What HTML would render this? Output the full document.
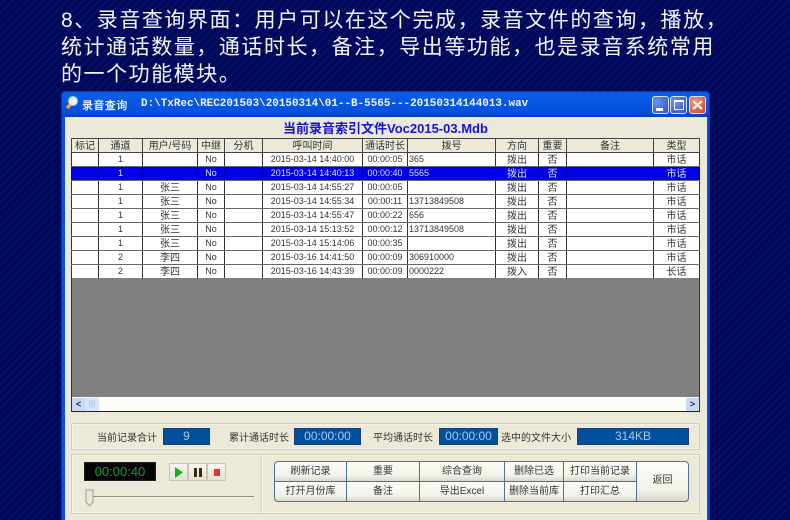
<!DOCTYPE html>
<html><head><meta charset="utf-8">
<style>
*{box-sizing:border-box}
html,body{margin:0;padding:0}
body{width:790px;height:520px;overflow:hidden;position:relative;font-family:"Liberation Sans","Noto Sans CJK SC",sans-serif;filter:blur(.3px);
background:#00085a repeating-linear-gradient(135deg,#00085a 0 3px,#081470 3px 4px,#00085a 4px 5.6px)}
.a{position:absolute}
.h{left:61px;color:#f4f5fa;font-size:21px;line-height:27px;letter-spacing:1.55px;white-space:nowrap}
#win{left:61px;top:91px;width:649px;height:429px;background:#0a52d8;border-radius:4px 4px 0 0;border:1px solid #0838b0;border-bottom:none}
#tb{left:0;top:0;width:647px;height:25px;background:linear-gradient(#0b5ae0,#0a5ce8 10%,#0550dc 80%,#0440c0);border-radius:4px 4px 0 0}
#in{left:3px;top:25px;width:642px;height:403px;background:#ece9d8}
.t{color:#fff;font-weight:bold;white-space:nowrap}
.wb{top:96px;width:17px;height:18px;border-radius:3px;border:1px solid #d8e4f8}
table{border-collapse:collapse;table-layout:fixed;position:absolute;left:71px;top:138px;width:628px;font-size:9px;color:#333}
td,th{height:14px;padding:0;border:1px solid #333;border-top-color:#666;border-bottom-color:#666;text-align:center;font-weight:normal;overflow:hidden;white-space:nowrap;line-height:13px}
th{background:#ece9d8;font-size:10px;border-color:#444;color:#333}
th span,td.c span{position:relative;top:1px}
td{background:#fff}
td.c{font-size:10px}
td.l{text-align:left;padding-left:1px}
tr.s td{background:#0000e8;color:#d8e0ff;border-left-color:#0000b0;border-right-color:#0000b0}
.p{background:#ece9d8;border:1px solid #d0cdb8;box-shadow:inset 0 0 0 1px #f4f2e6}
.lb{font-size:10px;color:#333;white-space:nowrap}
.v{background:#00509e;color:#a4c8f0;font-size:12px;text-align:center;line-height:15px;height:17px;top:428px;border:1px solid #1c3e70}
.b{position:absolute;background:linear-gradient(#fcfcf8,#f2f2ea 70%,#d8d8cc);border:1px solid #4c7098;font-size:10px;color:#333;text-align:center;white-space:nowrap}
.pb{position:absolute;top:463px;height:18px;background:linear-gradient(#f8f6ee,#e4e1d2);border:1px solid #c8c5b4}
</style></head><body>
<div class="a h" style="top:7px">8、录音查询界面：用户可以在这个完成，录音文件的查询，播放，</div>
<div class="a h" style="top:34px">统计通话数量，通话时长，备注，导出等功能，也是录音系统常用</div>
<div class="a h" style="top:61px">的一个功能模块。</div>

<div class="a" id="win"><div class="a" id="tb"></div><div class="a" id="in"></div></div>

<svg class="a" style="left:64px;top:95px" width="16" height="16" viewBox="0 0 16 16"><line x1="7" y1="9" x2="3" y2="13" stroke="#f0a030" stroke-width="3.5"/><circle cx="9" cy="6" r="4.5" fill="#e8f2fc" stroke="#a8c8e8"/></svg>
<div class="a t" style="left:82px;top:97px;font-size:11px;font-weight:normal;letter-spacing:.4px;-webkit-text-stroke:.2px #fff">录音查询</div>
<div class="a t" style="left:141px;top:97px;font-family:'Liberation Mono',monospace;font-size:10.95px;line-height:14px;color:#f0f4ff">D:\TxRec\REC201503\20150314\01--B-5565---20150314144013.wav</div>

<div class="a wb" style="left:652px;background:radial-gradient(circle at 30% 30%,#6c92ee,#2a50c8)"><div class="a" style="left:3px;top:11px;width:7px;height:3px;background:#fff"></div></div>
<div class="a wb" style="left:670px;background:radial-gradient(circle at 30% 30%,#6c92ee,#2a50c8)"><div class="a" style="left:3px;top:3px;width:10px;height:10px;border:1px solid #fff;border-top-width:2px"></div></div>
<div class="a wb" style="left:689px;background:radial-gradient(circle at 30% 30%,#f09878,#d84020)"><svg class="a" style="left:2px;top:3px" width="11" height="10"><path d="M1 1L10 9M10 1L1 9" stroke="#fff" stroke-width="2"/></svg></div>

<div class="a" style="left:283px;top:121px;font-size:13px;line-height:16px;font-weight:bold;color:#1414d8;white-space:nowrap">当前录音索引文件Voc2015-03.Mdb</div>

<table>
<colgroup><col style="width:27px"><col style="width:44px"><col style="width:55px"><col style="width:27px"><col style="width:38px"><col style="width:100px"><col style="width:45px"><col style="width:88px"><col style="width:43px"><col style="width:28px"><col style="width:87px"><col style="width:46px"></colgroup>
<tr><th><span>标记</span></th><th><span>通道</span></th><th><span>用户/号码</span></th><th><span>中继</span></th><th><span>分机</span></th><th><span>呼叫时间</span></th><th><span>通话时长</span></th><th><span>拨号</span></th><th><span>方向</span></th><th><span>重要</span></th><th><span>备注</span></th><th><span>类型</span></th></tr>
<tr><td></td><td>1</td><td></td><td>No</td><td></td><td>2015-03-14 14:40:00</td><td>00:00:05</td><td class="l">365</td><td class="c"><span>拨出</span></td><td class="c"><span>否</span></td><td></td><td class="c"><span>市话</span></td></tr>
<tr class="s"><td></td><td>1</td><td></td><td>No</td><td></td><td>2015-03-14 14:40:13</td><td>00:00:40</td><td class="l">5565</td><td class="c"><span>拨出</span></td><td class="c"><span>否</span></td><td></td><td class="c"><span>市话</span></td></tr>
<tr><td></td><td>1</td><td class="c"><span>张三</span></td><td>No</td><td></td><td>2015-03-14 14:55:27</td><td>00:00:05</td><td class="l"></td><td class="c"><span>拨出</span></td><td class="c"><span>否</span></td><td></td><td class="c"><span>市话</span></td></tr>
<tr><td></td><td>1</td><td class="c"><span>张三</span></td><td>No</td><td></td><td>2015-03-14 14:55:34</td><td>00:00:11</td><td class="l">13713849508</td><td class="c"><span>拨出</span></td><td class="c"><span>否</span></td><td></td><td class="c"><span>市话</span></td></tr>
<tr><td></td><td>1</td><td class="c"><span>张三</span></td><td>No</td><td></td><td>2015-03-14 14:55:47</td><td>00:00:22</td><td class="l">656</td><td class="c"><span>拨出</span></td><td class="c"><span>否</span></td><td></td><td class="c"><span>市话</span></td></tr>
<tr><td></td><td>1</td><td class="c"><span>张三</span></td><td>No</td><td></td><td>2015-03-14 15:13:52</td><td>00:00:12</td><td class="l">13713849508</td><td class="c"><span>拨出</span></td><td class="c"><span>否</span></td><td></td><td class="c"><span>市话</span></td></tr>
<tr><td></td><td>1</td><td class="c"><span>张三</span></td><td>No</td><td></td><td>2015-03-14 15:14:06</td><td>00:00:35</td><td class="l"></td><td class="c"><span>拨出</span></td><td class="c"><span>否</span></td><td></td><td class="c"><span>市话</span></td></tr>
<tr><td></td><td>2</td><td class="c"><span>李四</span></td><td>No</td><td></td><td>2015-03-16 14:41:50</td><td>00:00:09</td><td class="l">306910000</td><td class="c"><span>拨出</span></td><td class="c"><span>否</span></td><td></td><td class="c"><span>市话</span></td></tr>
<tr><td></td><td>2</td><td class="c"><span>李四</span></td><td>No</td><td></td><td>2015-03-16 14:43:39</td><td>00:00:09</td><td class="l">0000222</td><td class="c"><span>拨入</span></td><td class="c"><span>否</span></td><td></td><td class="c"><span>长话</span></td></tr>
</table>

<div class="a" style="left:71px;top:278px;width:629px;height:120px;background:#808080;border-left:1px solid #333;border-right:1px solid #333"></div>
<div class="a" style="left:71px;top:397px;width:629px;height:15px;background:#fbfbf8;border:1px solid #333;border-top:none;border-bottom-color:#222"></div>
<div class="a" style="left:72px;top:398px;width:13px;height:13px;background:#c8d8f4;color:#20304c;font:bold 9px/12px 'Liberation Sans',sans-serif;text-align:center">&lt;</div>
<div class="a" style="left:85px;top:398px;width:14px;height:13px;background:#d8e4f8;color:#a0b4d8;font:8px/12px 'Liberation Sans',sans-serif;text-align:center">|||</div>
<div class="a" style="left:686px;top:398px;width:13px;height:13px;background:#c8d8f4;color:#20304c;font:bold 9px/12px 'Liberation Sans',sans-serif;text-align:center">&gt;</div>

<div class="a p" style="left:71px;top:423px;width:629px;height:27px"></div>
<div class="a lb" style="left:97px;top:429px">当前记录合计</div>
<div class="a v" style="left:163px;width:47px">9</div>
<div class="a lb" style="left:229px;top:429px">累计通话时长</div>
<div class="a v" style="left:294px;width:67px">00:00:00</div>
<div class="a lb" style="left:373px;top:429px">平均通话时长</div>
<div class="a v" style="left:439px;width:59px">00:00:00</div>
<div class="a lb" style="left:501px;top:429px">选中的文件大小</div>
<div class="a v" style="left:577px;width:112px">314KB</div>

<div class="a p" style="left:71px;top:454px;width:629px;height:60px"></div>
<div class="a" style="left:261px;top:455px;width:2px;height:58px;background:#d8d5c4;border-right:1px solid #f8f6ee"></div>
<div class="a" style="left:84px;top:462px;width:72px;height:19px;background:#050505;color:#14a028;font-size:13px;line-height:18px;text-align:center;border:1px solid #222">00:00:40</div>
<div class="pb" style="left:169px;width:19px"><svg class="a" style="left:4px;top:3px" width="10" height="11"><path d="M1 0L9 5.5L1 11Z" fill="#18b020"/></svg></div>
<div class="pb" style="left:188px;width:19px"><svg class="a" style="left:4px;top:3px" width="10" height="11"><path d="M1 1H4V10H1ZM6 1H9V10H6Z" fill="#3a2a10"/></svg></div>
<div class="pb" style="left:207px;width:19px"><svg class="a" style="left:4px;top:3px" width="10" height="11"><path d="M2 2H8V9H2Z" fill="#ee3030"/></svg></div>
<div class="a" style="left:90px;top:496px;width:164px;height:2px;background:#8c8c80;border-bottom:1px solid #f4f4ec"></div>
<svg class="a" style="left:85px;top:489px" width="10" height="19"><path d="M1 1H8V13L4.5 17L1 13Z" fill="#ece9d8" stroke="#9c9a8c"/></svg>

<div class="b" style="left:274px;top:461px;width:73px;height:21px;line-height:19px;border-radius:4px 0 0 0">刷新记录</div>
<div class="b" style="left:346px;top:461px;width:74px;height:21px;line-height:19px">重要</div>
<div class="b" style="left:419px;top:461px;width:86px;height:21px;line-height:19px">综合查询</div>
<div class="b" style="left:504px;top:461px;width:60px;height:21px;line-height:19px">删除已选</div>
<div class="b" style="left:563px;top:461px;width:74px;height:21px;line-height:19px">打印当前记录</div>
<div class="b" style="left:274px;top:481px;width:73px;height:21px;line-height:19px;border-radius:0 0 0 4px">打开月份库</div>
<div class="b" style="left:346px;top:481px;width:74px;height:21px;line-height:19px">备注</div>
<div class="b" style="left:419px;top:481px;width:86px;height:21px;line-height:19px">导出Excel</div>
<div class="b" style="left:504px;top:481px;width:60px;height:21px;line-height:19px">删除当前库</div>
<div class="b" style="left:563px;top:481px;width:74px;height:21px;line-height:19px">打印汇总</div>
<div class="b" style="left:636px;top:461px;width:53px;height:41px;line-height:38px;border-radius:0 4px 4px 0">返回</div>
</body></html>
